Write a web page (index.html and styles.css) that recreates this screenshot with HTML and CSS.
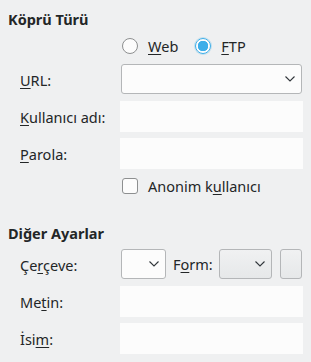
FILE: index.html
```html
<!DOCTYPE html>
<html lang="tr">
<head>
  <meta charset="UTF-8" />
  <title>Köprü Türü</title>
  <link rel="stylesheet" href="styles.css">
</head>
<body>

  <div class="panel">
    <div class="section-title">Köprü Türü</div>

    <div class="form first">
      <div></div>
      <div class="radios">
        <label class="radio"><span class="dot"></span><span><u>W</u>eb</span></label>
        <label class="radio"><span class="dot checked"></span><span><u>F</u>TP</span></label>
      </div>

      <label class="lbl"><u>U</u>RL:</label>
      <div class="combo wide">
        <svg width="10" height="6" viewBox="0 0 10 6"><path d="M0.5 0.5 L5 5 L9.5 0.5" fill="none" stroke="#31363b" stroke-width="1.1"/></svg>
      </div>

      <label class="lbl"><u>K</u>ullanıcı adı:</label>
      <div class="field"></div>

      <label class="lbl"><u>P</u>arola:</label>
      <div class="field"></div>

      <div></div>
      <label class="check"><span class="box"></span><span>Anonim k<u>u</u>llanıcı</span></label>
    </div>

    <div class="section-title second">Diğer Ayarlar</div>

    <div class="form last">
      <label class="lbl">Çe<u>r</u>çeve:</label>
      <div class="frame-row">
        <div class="combo small">
          <svg width="10" height="6" viewBox="0 0 10 6"><path d="M0.5 0.5 L5 5 L9.5 0.5" fill="none" stroke="#31363b" stroke-width="1.1"/></svg>
        </div>
        <span class="inline-lbl">F<u>o</u>rm:</span>
        <div class="combo form-combo">
          <svg width="10" height="6" viewBox="0 0 10 6"><path d="M0.5 0.5 L5 5 L9.5 0.5" fill="none" stroke="#31363b" stroke-width="1.1"/></svg>
        </div>
        <div class="tool-btn"></div>
      </div>

      <label class="lbl">Me<u>t</u>in:</label>
      <div class="field"></div>

      <label class="lbl">İsi<u>m</u>:</label>
      <div class="field"></div>
    </div>
  </div>

</body>
</html>
```

FILE: styles.css
```css
body {
  margin: 0;
  background: #eff0f1;
  font-family: 'Noto Sans', sans-serif;
  font-size: 14.5px;
  color: #232627;
}

.panel {
  padding: 10px 8px 0 8px;
}

.section-title {
  font-weight: bold;
  line-height: 18px;
}

.section-title.second {
  margin-top: 30px;
}

.form {
  display: grid;
  grid-template-columns: 100px 1fr;
  padding-left: 12px;
  row-gap: 6px;
  align-items: center;
}

.form.first {
  margin-top: 10px;
}

.form.last {
  margin-top: 7px;
}

u {
  text-decoration-thickness: 1px;
  text-underline-offset: 2px;
}

.lbl {
  line-height: 18px;
}

.radios {
  display: flex;
  align-items: center;
  gap: 17px;
  padding-left: 2px;
  height: 16px;
  margin-bottom: 4px;
}

.radio, .check {
  display: flex;
  align-items: center;
  gap: 10px;
  line-height: 16px;
}

.dot {
  width: 14px;
  height: 14px;
  border: 1px solid #8d8f90;
  border-radius: 50%;
  background: #fcfcfc;
}

.dot.checked {
  border-color: #3daee9;
  background: radial-gradient(circle, #3daee9 0, #3daee9 5px, #fcfcfc 5.5px);
  box-shadow: 0 0 0 1px rgba(61, 174, 233, 0.25);
}

.check {
  padding-left: 2px;
  margin-top: 3px;
}

.box {
  width: 14px;
  height: 14px;
  border: 1px solid #8d8f90;
  border-radius: 3px;
  background: #fcfcfc;
}

.combo {
  height: 28px;
  border: 1px solid #b4b6b8;
  border-radius: 3px;
  background: #fcfcfc;
  display: flex;
  align-items: center;
  justify-content: flex-end;
  box-sizing: content-box;
}

.combo svg {
  margin-right: 6px;
}

.combo.wide {
  margin: 0 1px 1px 1px;
}

.field {
  height: 31px;
  background: #fcfcfc;
}

.frame-row {
  display: flex;
  align-items: center;
  padding-left: 1px;
  margin-bottom: 1px;
}

.combo.small {
  width: 43px;
}

.inline-lbl {
  margin-left: 7px;
  width: 46px;
  line-height: 18px;
}

.combo.form-combo {
  width: 51px;
  background: linear-gradient(#f0f1f2, #e6e8e9);
}

.tool-btn {
  margin-left: 8px;
  width: 20px;
  height: 28px;
  border: 1px solid #b4b6b8;
  border-radius: 3px;
  background: linear-gradient(#f0f1f2, #e6e8e9);
}
```
